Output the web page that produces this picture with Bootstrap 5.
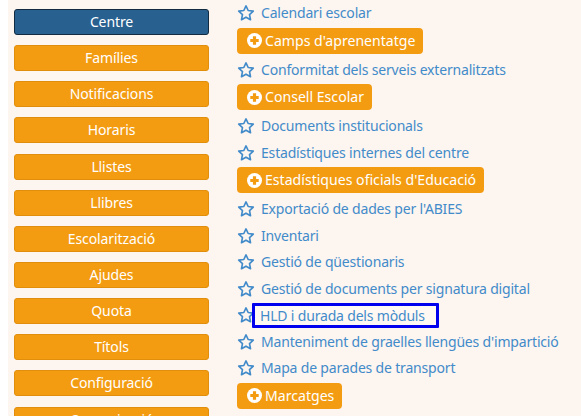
<!DOCTYPE html>
<html lang="ca">
<head>
    <meta charset="UTF-8">
    <meta name="viewport" content="width=device-width, initial-scale=1.0">
    <title>Menú</title>
    <link href="https://cdn.jsdelivr.net/npm/bootstrap@5.3.0/dist/css/bootstrap.min.css" rel="stylesheet">
    <style>
        html, body { height: 416px; overflow: hidden; }
        body { background: #fff; font-family: "Noto Sans", sans-serif; font-size: 14px; }
        .page_wrap { height: 416px; margin-left: 8px; background: #fdf5ef; overflow: hidden; }
        .side_menu { width: 201px; padding: 9px 0 0 6px; flex: none; }
        .side_btn {
            display: block; height: 26px; margin-bottom: 10.15px; padding: 0; line-height: 24px;
            background: #f39c12; border: 1px solid #e08e0b; border-radius: 3px;
            color: #fff; font-size: 14px; letter-spacing: -0.1px; text-align: center; text-decoration: none;
        }
        .side_btn.is_active { background: #286090; border-color: #122b40; }
        .link_list { margin-left: 28px; width: 340px; }
        .link_row { height: 26.5px; white-space: nowrap; }
        .link_row a { color: #428bca; text-decoration: none; font-size: 14px; letter-spacing: -0.18px; line-height: 26px; padding: 0 3px 0 6px; }
        .link_row svg { width: 18px; height: 18px; flex: none; }
        .link_row a.has_focus { border: 3px solid #0000ee; border-radius: 1px; padding: 0 11px 0 5px; margin-left: -3px; line-height: 19px; background: #fff8f3; }
        .pill_row { height: 30px; padding-top: 1px; }
        .pill_btn {
            height: 26px; padding: 0 8px 0 10px; gap: 3px; background: #f39c12; border-radius: 4px;
            color: #fff; font-size: 14.1px; text-decoration: none; white-space: nowrap;
        }
        .pill_btn svg { width: 15px; height: 15px; flex: none; }
    </style>
</head>
<body>
    <div class="page_wrap d-flex">
        <!-- Left menu -->
        <div class="side_menu">
            <a class="side_btn is_active" href="#">Centre</a>
            <a class="side_btn" href="#">Famílies</a>
            <a class="side_btn" href="#">Notificacions</a>
            <a class="side_btn" href="#">Horaris</a>
            <a class="side_btn" href="#">Llistes</a>
            <a class="side_btn" href="#">Llibres</a>
            <a class="side_btn" href="#">Escolarització</a>
            <a class="side_btn" href="#">Ajudes</a>
            <a class="side_btn" href="#">Quota</a>
            <a class="side_btn" href="#">Títols</a>
            <a class="side_btn" href="#">Configuració</a>
            <a class="side_btn" href="#">Comunicació</a>
        </div>
        <!-- Options list -->
        <div class="link_list" id="links"></div>
    </div>
    <script>
        const star = '<svg viewBox="0 0 24 24" fill="none" stroke="#428bca" stroke-width="2.2" stroke-linejoin="round"><path d="M12 2.5l2.9 6.2 6.8.8-5 4.7 1.3 6.8-6-3.4-6 3.4 1.3-6.8-5-4.7 6.8-.8z"/></svg>';
        const plus = '<svg viewBox="0 0 16 16"><circle cx="8" cy="8" r="8" fill="#fff"/><path d="M3.5 6.3h2.8V3.5h3.4v2.8h2.8v3.4H9.7v2.8H6.3V9.7H3.5z" fill="#f39c12"/></svg>';
        // [text, is group button]
        const items = [
            ["Calendari escolar", 0],
            ["Camps d'aprenentatge", 1],
            ["Conformitat dels serveis externalitzats", 0],
            ["Consell Escolar", 1],
            ["Documents institucionals", 0],
            ["Estadístiques internes del centre", 0],
            ["Estadístiques oficials d'Educació", 1],
            ["Exportació de dades per l'ABIES", 0],
            ["Inventari", 0],
            ["Gestió de qüestionaris", 0],
            ["Gestió de documents per signatura digital", 0],
            ["HLD i durada dels mòduls", 2],
            ["Manteniment de graelles llengües d'impartició", 0],
            ["Mapa de parades de transport", 0],
            ["Marcatges", 1]
        ];
        const list = document.getElementById('links');
        items.forEach(item => {
            const div = document.createElement('div');
            if (item[1] === 1) {
                div.className = 'pill_row';
                div.innerHTML = `<a class="pill_btn d-inline-flex align-items-center" href="#">${plus}<span>${item[0]}</span></a>`;
            } else {
                div.className = 'link_row d-flex align-items-center';
                div.innerHTML = `${star}<a class="${item[1] === 2 ? 'has_focus' : ''}" href="#">${item[0]}</a>`;
            }
            list.appendChild(div);
        });
    </script>
    <script src="https://cdn.jsdelivr.net/npm/bootstrap@5.3.0/dist/js/bootstrap.bundle.min.js"></script>
</body>
</html>
